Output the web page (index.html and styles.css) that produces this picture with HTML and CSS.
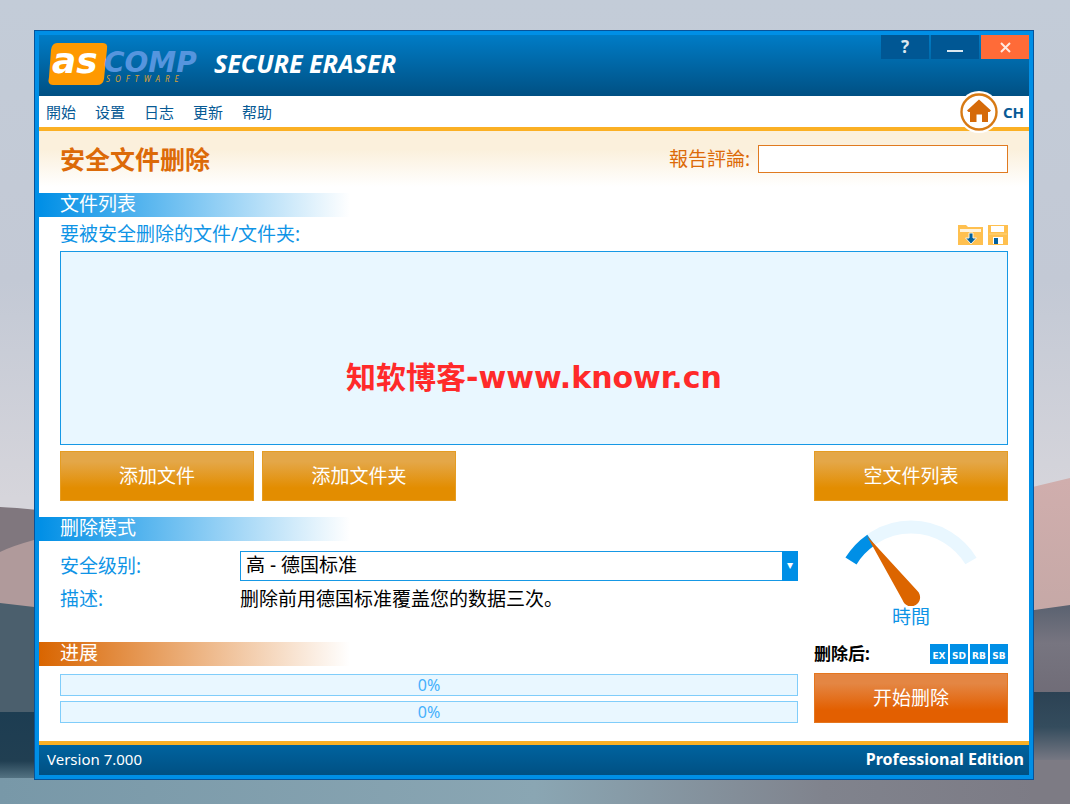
FILE: index.html
```html
<!DOCTYPE html>
<html lang="zh">
<head>
<meta charset="utf-8">
<title>Secure Eraser</title>
<link rel="stylesheet" href="styles.css">
</head>
<body>
<svg class="wallpaper" viewBox="0 0 1070 804" preserveAspectRatio="none" aria-hidden="true">
  <defs>
    <linearGradient id="sky" x1="0" y1="0" x2="0" y2="1"><stop offset="0" stop-color="#c3ccd8"/><stop offset=".35" stop-color="#c3c9d5"/><stop offset=".62" stop-color="#d6d5db"/></linearGradient>
    <linearGradient id="pink" x1="0" y1="0" x2="0" y2="1"><stop offset="0" stop-color="#d0aead"/><stop offset="1" stop-color="#c5a8a6"/></linearGradient>
    <linearGradient id="slate" x1="0" y1="0" x2="0" y2="1"><stop offset="0" stop-color="#5a6270"/><stop offset=".4" stop-color="#777580"/><stop offset="1" stop-color="#6f6b76"/></linearGradient>
    <linearGradient id="shade" x1="0" y1="0" x2="0" y2="1"><stop offset="0" stop-color="#2c4254"/><stop offset=".5" stop-color="#344c5d"/><stop offset="1" stop-color="#7a7a85"/></linearGradient>
    <linearGradient id="deep" x1="0" y1="0" x2="0" y2="1"><stop offset="0" stop-color="#1d3d52"/><stop offset=".7" stop-color="#213f52"/><stop offset="1" stop-color="#5f7e8d"/></linearGradient>
    <linearGradient id="water" x1="0" y1="0" x2="1" y2="0"><stop offset="0" stop-color="#7898a8"/><stop offset=".5" stop-color="#8aa6b3"/><stop offset=".77" stop-color="#80838d"/><stop offset="1" stop-color="#7c7a84"/></linearGradient>
  </defs>
  <rect width="1070" height="804" fill="url(#sky)"/>
  <path d="M0 507 Q20 508 60 512 V560 H0Z" fill="#80777e"/>
  <path d="M0 552 Q12 546 34 540 L50 534 V620 H0Z" fill="#b09a9b"/>
  <path d="M0 603 L60 610 V720 H0Z" fill="#4b5f6d"/>
  <path d="M1020 490 L1070 478 V620 H1020Z" fill="url(#pink)"/>
  <path d="M1020 612 L1070 605 V700 H1020Z" fill="url(#slate)"/>
  <rect x="1020" y="692" width="50" height="70" fill="url(#shade)"/>
  <rect y="712" width="60" height="70" fill="url(#deep)"/>
  <rect y="778" width="1070" height="26" fill="url(#water)"/>
  <rect x="1030" y="760" width="40" height="44" fill="#7d7b84"/>
</svg>

<main class="window">
  <header class="titlebar">
    <div class="brand">
      <svg class="logo" viewBox="0 0 162 46" role="img" aria-label="ASCOMP Software">
        <path d="M9 2 H55 Q60 2 59 8 L56 38 Q55 44 49 44 H5 Q-1 44 1 36 L3 9 Q4 2 9 2Z" fill="#ff9900"/>
        <text x="4" y="32" class="logo-as">as</text>
        <text x="56" y="31" class="logo-comp">COMP</text>
        <text x="58" y="41" class="logo-soft">SOFTWARE</text>
      </svg>
      <h1 class="product">SECURE ERASER</h1>
    </div>
    <div class="controls">
      <button class="control" type="button" aria-label="Help">?</button>
      <button class="control" type="button" aria-label="Minimize"><svg width="16" height="12" viewBox="0 0 16 12"><path d="M0 10H16" stroke="#dce8f0" stroke-width="2"/></svg></button>
      <button class="control control-close" type="button" aria-label="Close"><svg width="11" height="11" viewBox="0 0 11 11"><path d="M1 1L10 10M10 1L1 10" stroke="#ffe9df" stroke-width="2"/></svg></button>
    </div>
  </header>

  <nav class="menubar">
    <div class="menu">
      <a href="#">開始</a><a href="#">设置</a><a href="#">日志</a><a href="#">更新</a><a href="#">帮助</a>
    </div>
    <div class="menu-right">
      <a class="home" href="#" aria-label="Home"><svg width="40" height="44" viewBox="0 0 40 44">
        <circle cx="20" cy="22" r="21" fill="#fff"/>
        <circle cx="20" cy="22" r="17.5" fill="#fff" stroke="#d77a14" stroke-width="2.4"/>
        <path d="M20 9.5 L32 20.5 L30.5 22 H29 V32 H23 V24.500H17.500V32 H11 V22 H9.500L8 20.500Z" fill="#d56a09"/>
      </svg></a>
      <a class="lang" href="#">CH</a>
    </div>
  </nav>

  <section class="page-head">
    <h2 class="page-title">安全文件删除</h2>
    <div class="comment"><label for="comment">報告評論:</label><input id="comment" type="text"></div>
  </section>

  <section class="files">
    <h3 class="band">文件列表</h3>
    <div class="files-head">
      <span id="list-label">要被安全删除的文件/文件夹:</span>
      <div class="tools">
        <button type="button" class="tool" aria-label="Load list"><svg width="25" height="20" viewBox="0 0 25 20"><path d="M0 20V0H8L10 2H25V20Z" fill="#ffc04f"/><path d="M2 4H23V7H2Z" fill="#fff3dc"/><path d="M11 8H15V13H18.500L13 19L7.500 13H11Z" fill="#00609f" stroke="#fff3dc"/></svg></button>
        <button type="button" class="tool" aria-label="Save list"><svg width="20" height="20" viewBox="0 0 20 20"><path d="M0 0H20V20H0Z" fill="#ffc04f"/><path d="M3 1H16V7H3Z" fill="#fff"/><path d="M1 9H19" stroke="#ffd680"/><path d="M5 12H15V19H5Z" fill="#fff"/><path d="M6 13H10V19H6Z" fill="#00609f"/></svg></button>
      </div>
    </div>
    <div class="file-list" role="listbox" aria-labelledby="list-label"><span class="watermark">知软博客-www.knowr.cn</span></div>
    <div class="actions">
      <button type="button" class="btn">添加文件</button>
      <button type="button" class="btn">添加文件夹</button>
      <button type="button" class="btn btn-end">空文件列表</button>
    </div>
  </section>

  <div class="lower">
    <section class="mode">
      <h3 class="band">删除模式</h3>
      <div class="field"><label class="field-name" for="level">安全级别:</label>
        <div class="select-box"><select id="level"><option>高 - 德国标准</option></select></div></div>
      <div class="field field-desc"><span class="field-name">描述:</span><span class="desc">删除前用德国标准覆盖您的数据三次。</span></div>
    </section>
    <figure class="gauge">
      <svg width="132" height="86" viewBox="0 0 132 86" aria-hidden="true">
        <path d="M6 41 A70 70 0 0 1 126 41" fill="none" stroke="#e9f7ff" stroke-width="13"/>
        <path d="M6 41 A70 70 0 0 1 26 20" fill="none" stroke="#008fe6" stroke-width="13"/>
        <path d="M22 16 L72.500 71 A9 9 0 1 1 57.500 80Z" fill="#dc6500"/>
      </svg>
      <figcaption>時間</figcaption>
    </figure>
    <section class="progress">
      <h3 class="band band-orange">进展</h3>
      <div class="bars">
        <div class="bar" role="progressbar" aria-label="File" aria-valuenow="0">0%</div>
        <div class="bar" role="progressbar" aria-label="Total" aria-valuenow="0">0%</div>
      </div>
    </section>
    <section class="run">
      <div class="after"><span class="after-name">删除后:</span>
        <div class="options"><button type="button">EX</button><button type="button">SD</button><button type="button">RB</button><button type="button">SB</button></div></div>
      <button type="button" class="btn btn-start">开始删除</button>
    </section>
  </div>

  <footer class="status"><span>Version 7.000</span><strong>Professional Edition</strong></footer>
</main>
</body>
</html>
```
FILE: styles.css
```css
* { box-sizing: border-box; }
body {
  margin: 0;
  min-height: 100vh;
  padding: 30px 36px 24px 34px;
  display: flex;
  font-family: "Noto Sans", "Noto Sans CJK SC", sans-serif;
  font-size: 19px;
  line-height: 24px;
  background: #c3ccd8;
}
h1, h2, h3, figure { margin: 0; font-weight: 400; }
button, input, select { font: inherit; padding: 0; border: 0; border-radius: 0; }
a { color: inherit; text-decoration: none; }
svg { display: block; }
.wallpaper { position: fixed; inset: 0; width: 100%; height: 100%; z-index: -1; }
.window {
  flex: 1;
  min-width: 0;
  display: flex;
  flex-direction: column;
  background: #fff;
  border: 5px solid #008fe6;
  outline: 1px solid #07539a;
  outline-offset: -1px;
}

.titlebar {
  display: flex;
  justify-content: space-between;
  align-items: flex-start;
  height: 61px;
  background: linear-gradient(#007cc6, #005083);
}
.brand { display: flex; align-items: center; gap: 4px; padding: 6px 0 0 9px; }
.logo { width: 162px; height: 46px; overflow: visible; }
.logo-as, .logo-comp { font-family: "DejaVu Sans", sans-serif; font-weight: 700; font-style: italic; }
.logo-as { font-size: 36px; fill: #fff; }
.logo-comp { font-size: 28px; fill: #5595de; }
.logo-soft { font-size: 8px; font-style: italic; letter-spacing: 5px; fill: #d9a032; }
.product { font-size: 25px; font-weight: 700; font-style: italic; line-height: 24px; padding-bottom: 2px; color: #fff; }
.controls { display: flex; gap: 2px; }
.control {
  display: flex;
  align-items: center;
  justify-content: center;
  width: 48px;
  height: 24px;
  background: #005794;
  color: #dce8f0;
  font-size: 17px;
  font-weight: 700;
}
.control-close { background: #ff6b38; }

.menubar {
  display: flex;
  justify-content: space-between;
  align-items: center;
  height: 35px;
  padding: 0 5px 0 7px;
  border-bottom: 4px solid #fbb024;
  font-size: 15px;
  color: #075a95;
}
.menu { display: flex; gap: 19px; }
.menu-right { display: flex; align-items: center; gap: 4px; height: 31px; }
.home { position: relative; z-index: 1; }
.lang { font-weight: 700; }

.page-head {
  display: flex;
  justify-content: space-between;
  align-items: center;
  height: 62px;
  padding: 0 21px 6px;
  background: linear-gradient(#fbf0dc 30%, #fff 90%);
  color: #dc6a08;
}
.page-title { font-size: 25px; font-weight: 700; }
.comment { display: flex; align-items: center; gap: 8px; }
.comment input { width: 250px; height: 28px; border: 1px solid #e07a20; background: #fff; }

.band {
  width: 311px;
  height: 24px;
  padding-left: 21px;
  line-height: 22px;
  font-size: 19px;
  color: #fff;
  background: linear-gradient(90deg, #008fe6, #fff);
}
.band-orange { background: linear-gradient(90deg, #d96500, #fff); }

.files { flex: 1; display: flex; flex-direction: column; }
.files-head {
  display: flex;
  justify-content: space-between;
  align-items: center;
  height: 34px;
  padding: 0 21px;
  color: #0f94e6;
}
.tools { display: flex; gap: 5px; padding-top: 2px; }
.tool { background: none; }
.file-list {
  flex: 1;
  min-height: 120px;
  margin: 0 21px;
  display: flex;
  align-items: center;
  justify-content: center;
  border: 1px solid #1698e5;
  background: #e9f7ff;
}
.watermark {
  padding-top: 60px;
  font-family: "DejaVu Sans", "Noto Sans CJK SC", sans-serif;
  font-size: 30px;
  font-weight: 700;
  line-height: 40px;
  color: #ff2a2a;
}
.actions { display: flex; gap: 8px; padding: 6px 21px 16px; }
.btn {
  width: 194px;
  height: 50px;
  color: #fff;
  border: 1px solid #e59c22;
  background: linear-gradient(#e4a748 20%, #e38d00 75%);
}
.btn-end { margin-left: auto; }

.lower {
  display: grid;
  grid-template-columns: minmax(0, 1fr) 194px;
  column-gap: 16px;
  padding: 0 21px 18px 0;
}
.mode { min-height: 125px; }
.field { display: flex; align-items: center; padding: 10px 0 0 21px; }
.field-name { width: 180px; color: #0f94e6; }
.field-desc { padding-top: 6px; }
.select-box { position: relative; flex: 1; }
.select-box::after {
  content: "▾";
  position: absolute;
  top: 0;
  right: 0;
  width: 16px;
  height: 100%;
  background: #008fe6;
  color: #fff;
  font-family: "DejaVu Sans", sans-serif;
  font-size: 12px;
  line-height: 28px;
  text-align: center;
  pointer-events: none;
}
.select-box select {
  display: block;
  width: 100%;
  height: 30px;
  padding: 0 20px 2px 5px;
  appearance: none;
  border: 1px solid #1698e5;
  background: #fff;
  color: #000;
}
.gauge { display: flex; flex-direction: column; align-items: center; padding-top: 3px; line-height: 22px; color: #0f94e6; }
.bars { display: flex; flex-direction: column; gap: 5px; padding: 8px 0 0 21px; }
.bar {
  height: 22px;
  border: 1px solid #80cdfa;
  background: #e9f7ff;
  color: #45b0fc;
  font-size: 16px;
  line-height: 21px;
  text-align: center;
}
.run { display: flex; flex-direction: column; justify-content: space-between; }
.after { display: flex; justify-content: space-between; align-items: center; }
.after-name { font-weight: 700; font-size: 17px; }
.options { display: flex; gap: 2px; }
.options button {
  width: 18px;
  height: 20px;
  background: #008fe6;
  color: #fff;
  font-family: "DejaVu Sans", sans-serif;
  font-size: 9px;
  font-weight: 700;
}
.btn-start { border-color: #e5761e; background: linear-gradient(#e48643 20%, #e35f00 75%); }

.status {
  display: flex;
  justify-content: space-between;
  align-items: center;
  height: 34px;
  padding: 0 5px 2px 8px;
  border-top: 4px solid #fbb024;
  background: linear-gradient(#00639f, #005083);
  color: #fff;
  font-size: 15px;
}
.status strong { font-size: 16px; }
```
